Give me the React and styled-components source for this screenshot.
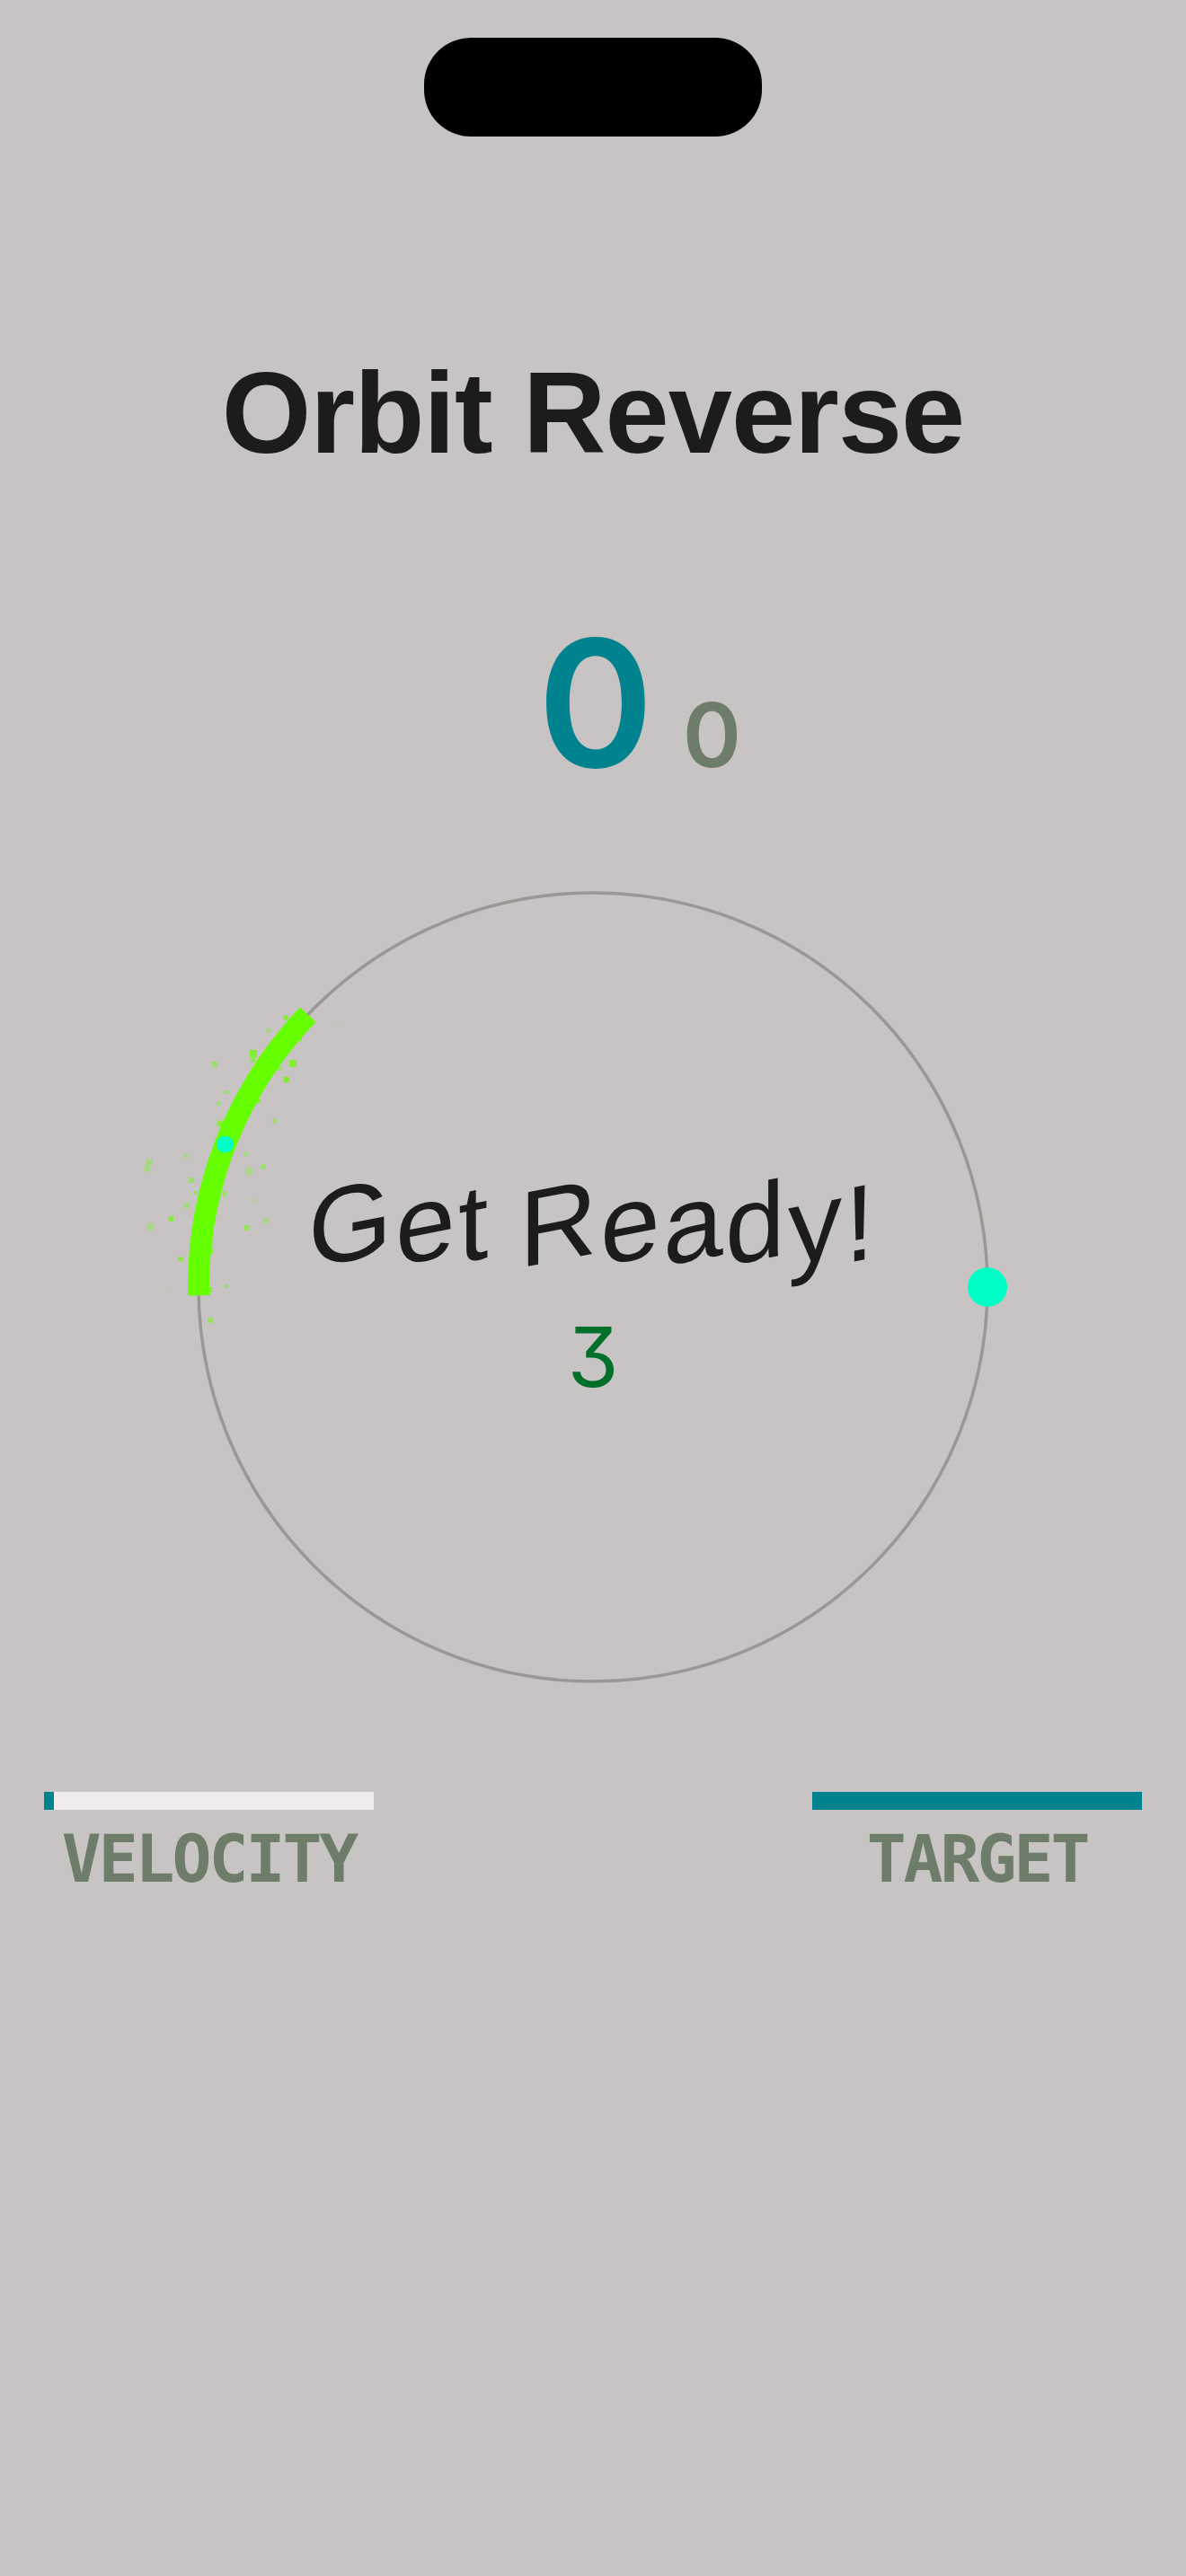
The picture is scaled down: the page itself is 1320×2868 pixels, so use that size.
import React from "react";
import styled, { createGlobalStyle } from "styled-components";

const GlobalStyle = createGlobalStyle`
  html, body {
    margin: 0;
    padding: 0;
    background: #c8c4c3;
  }
  #root {
    width: 1320px;
  }
`;

const Page = styled.main`
  width: 1320px;
  min-height: 2868px;
  background: #c8c4c3;
  display: flex;
  flex-direction: column;
  align-items: center;
  padding-top: 42px;
  box-sizing: border-box;
  font-family: "Liberation Sans", Arial, sans-serif;
`;

const Island = styled.div`
  width: 376px;
  height: 110px;
  border-radius: 52px;
  background: #000;
`;

const Title = styled.h1`
  margin: 244px 0 0;
  font-family: "Liberation Sans", Arial, sans-serif;
  font-weight: 700;
  font-size: 128px;
  line-height: 1;
  letter-spacing: -1px;
  color: #1c1c1c;
  text-align: center;
`;

const ScoreRow = styled.div`
  margin-top: 161px;
  width: 100%;
  box-sizing: border-box;
  padding-left: 6px;
  display: grid;
  grid-template-columns: 1fr auto 1fr;
  align-items: baseline;
  font-family: Inter, "Noto Sans", sans-serif;
  font-weight: 600;
`;

const ScoreValue = styled.span`
  grid-column: 2;
  font-size: 196px;
  line-height: 1;
  color: #00838f;
`;

const ScoreSub = styled.span`
  grid-column: 3;
  justify-self: start;
  margin-left: 32px;
  font-size: 99px;
  line-height: 1;
  color: #6d7d69;
`;

const Arena = styled.section`
  margin-top: 112px;
  width: 880px;
  height: 880px;
  display: grid;
  > * {
    grid-area: 1 / 1;
  }
`;

const OrbitSvg = styled.svg`
  display: block;
  width: 880px;
  height: 880px;
  overflow: visible;
`;

const Center = styled.div`
  display: flex;
  flex-direction: column;
  align-items: center;
  justify-content: center;
  padding-bottom: 8px;
  box-sizing: border-box;
`;

const Ready = styled.div`
  font-family: "Liberation Sans", Arial, sans-serif;
  font-weight: 400;
  font-size: 120px;
  line-height: 1;
  letter-spacing: 3px;
  color: #1c1c1c;
  white-space: nowrap;
`;

const Letter = styled.span`
  display: inline-block;
  transform: skewY(-11deg);
`;

const WordGap = styled.span`
  display: inline-block;
  width: 0.27em;
`;

const Countdown = styled.div`
  margin-top: 44px;
  font-family: Inter, "Noto Sans", sans-serif;
  font-feature-settings: "cv09" 1, "ss01" 1;
  font-weight: 400;
  font-size: 92px;
  line-height: 1;
  color: #00702b;
`;

const Meters = styled.section`
  margin-top: 122px;
  width: 100%;
  box-sizing: border-box;
  padding: 0 49px;
  display: flex;
  justify-content: space-between;
`;

const Meter = styled.div`
  width: 367px;
  display: flex;
  flex-direction: column;
  align-items: center;
`;

const Track = styled.div`
  width: 100%;
  height: 20px;
  background: #f0ecec;
  display: flex;
`;

const Fill = styled.div`
  height: 100%;
  background: #00838f;
`;

const MeterLabel = styled.div`
  margin-top: 18px;
  font-family: "DejaVu Sans Mono", "Liberation Mono", monospace;
  font-weight: 700;
  font-size: 73px;
  line-height: 1;
  letter-spacing: -3px;
  color: #6d7d69;
`;

const particles = [
  [98, 140, 5, 0.75], [79, 154, 5, 0.3], [113, 163, 6, 0.7], [62, 180, 8, 0.75],
  [62, 187, 5, 0.7], [106, 191, 8, 0.75], [19, 192, 6, 0.45], [92, 197, 4, 0.55],
  [99, 209, 6, 0.75], [31, 223, 4, 0.5], [67, 233, 5, 0.7], [23, 236, 4, 0.5],
  [86, 255, 5, 0.3], [25, 258, 7, 0.65], [37, 290, 4, 0.7], [54, 292, 5, 0.3],
  [-13, 294, 5, 0.3], [-54, 301, 7, 0.35], [-56, 308, 7, 0.3], [73, 306, 5, 0.5],
  [57, 311, 8, 0.3], [-7, 321, 6, 0.45], [-2, 335, 4, 0.5], [30, 336, 5, 0.5],
  [22, 339, 4, 0.5], [63, 344, 5, 0.15], [-12, 349, 7, 0.3], [-30, 364, 6, 0.65],
  [76, 366, 6, 0.3], [-53, 373, 8, 0.3], [55, 374, 6, 0.5], [16, 386, 3, 0.3],
  [13, 391, 7, 0.7], [15, 400, 5, 0.7], [-19, 409, 5, 0.7], [13, 443, 6, 0.7],
  [32, 439, 3, 0.7], [14, 477, 6, 0.5], [157, 148, 3, 0.15], [-34, 441, 3, 0.12],
];

const R = 439;
const CX = 440;
const CY = 440;
const pt = (deg) => {
  const a = (deg * Math.PI) / 180;
  return [CX + R * Math.cos(a), CY + R * Math.sin(a)];
};

function Orbit() {
  const [x1, y1] = pt(178.8);
  const [x2, y2] = pt(223.7);
  return (
    <OrbitSvg viewBox="0 0 880 880">
      <circle cx={CX} cy={CY} r={R} fill="none" stroke="#9a9897" strokeWidth="3.5" />
      {particles.map(([x, y, s, o], i) => (
        <rect key={i} x={x - s / 2} y={y - s / 2} width={s} height={s} fill="#66ff00" opacity={o} />
      ))}
      <path
        d={`M ${x1} ${y1} A ${R} ${R} 0 0 1 ${x2} ${y2}`}
        fill="none"
        stroke="#66ff00"
        strokeWidth="24"
        strokeLinecap="butt"
      />
      <circle cx="30.5" cy="281" r="9.5" fill="#00ffc6" />
      <circle cx="879" cy="440" r="22" fill="#00ffc6" />
    </OrbitSvg>
  );
}

function SkewText({ text }) {
  return (
    <Ready>
      {text.split("").map((c, i) =>
        c === " " ? <WordGap key={i} /> : <Letter key={i}>{c}</Letter>
      )}
    </Ready>
  );
}

export default function App() {
  const velocity = 3;
  const target = 100;
  return (
    <>
      <GlobalStyle />
      <Page>
        <Island />
        <Title>Orbit Reverse</Title>
        <ScoreRow>
          <ScoreValue>0</ScoreValue>
          <ScoreSub>0</ScoreSub>
        </ScoreRow>
        <Arena>
          <Orbit />
          <Center>
            <SkewText text="Get Ready!" />
            <Countdown>3</Countdown>
          </Center>
        </Arena>
        <Meters>
          <Meter>
            <Track>
              <Fill style={{ width: `${velocity}%` }} />
            </Track>
            <MeterLabel>VELOCITY</MeterLabel>
          </Meter>
          <Meter>
            <Track>
              <Fill style={{ width: `${target}%` }} />
            </Track>
            <MeterLabel>TARGET</MeterLabel>
          </Meter>
        </Meters>
      </Page>
    </>
  );
}
